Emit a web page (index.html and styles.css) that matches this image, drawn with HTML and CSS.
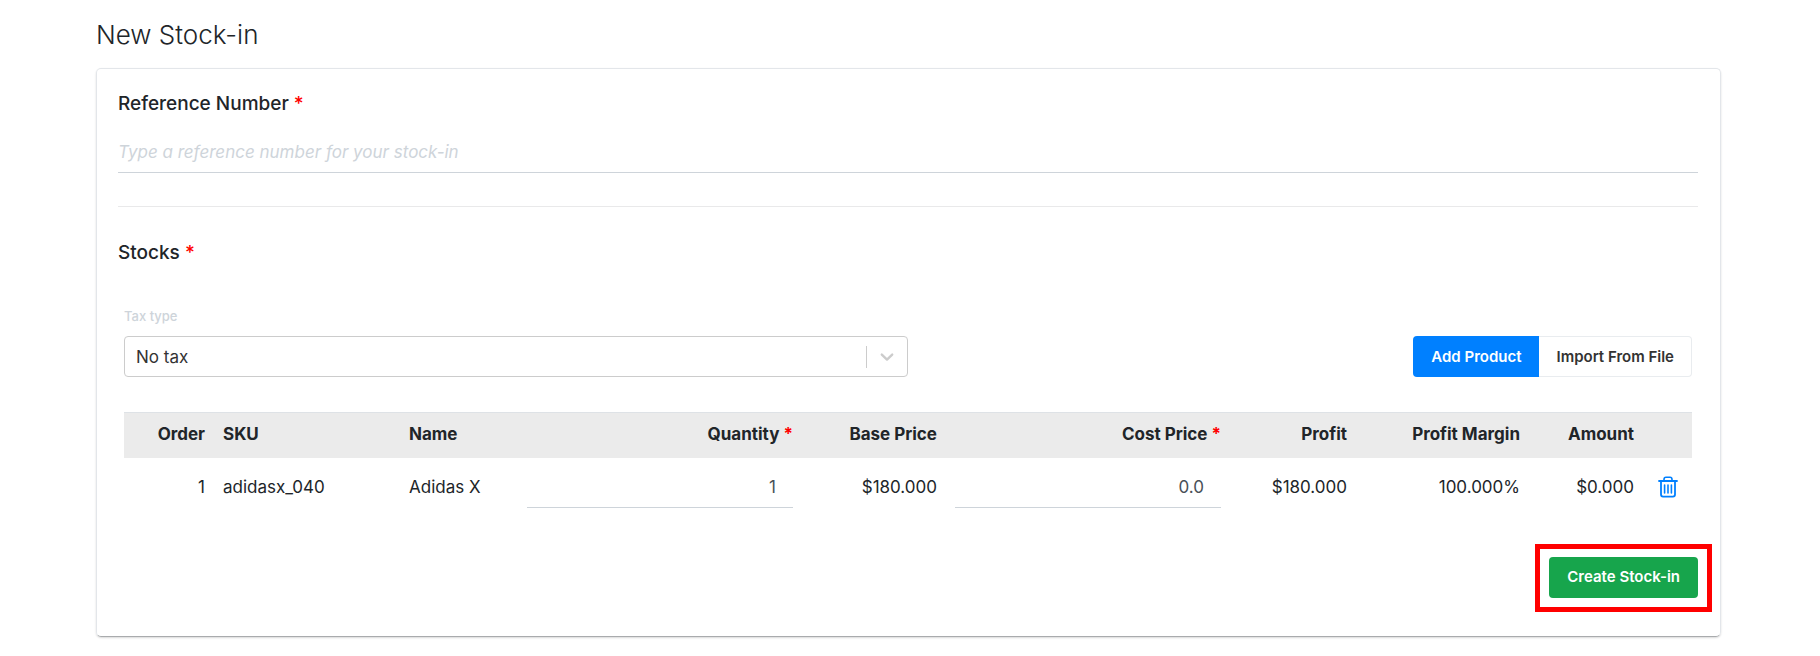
FILE: index.html
```
<!DOCTYPE html>
<html lang="en">
<head>
<meta charset="utf-8">
<meta name="viewport" content="width=device-width, initial-scale=1">
<title>New Stock-in</title>
<link rel="stylesheet" href="styles.css">
</head>
<body>
<main class="page">
  <h1 class="page-title">New Stock-in</h1>
  <form class="card">
    <label class="field-label" for="reference">Reference Number <span class="required">*</span></label>
    <input class="line-input reference-input" id="reference" type="text" placeholder="Type a reference number for your stock-in">
    <hr class="divider">
    <h2 class="field-label">Stocks <span class="required">*</span></h2>
    <section class="stocks">
      <div class="toolbar">
        <div class="tax">
          <label class="tax-label" for="tax">Tax type</label>
          <div class="select-wrap">
            <select class="select" id="tax"><option>No tax</option></select>
            <span class="select-indicator">
              <svg width="20" height="20" viewBox="0 0 20 20" aria-hidden="true"><path d="M4.8 7.6 10 12.6 15.2 7.6" fill="none" stroke="currentColor" stroke-width="2.4" stroke-linecap="round" stroke-linejoin="round"/></svg>
            </span>
          </div>
        </div>
        <div class="button-group">
          <button class="button button-primary" type="button">Add Product</button>
          <button class="button button-plain" type="button">Import From File</button>
        </div>
      </div>
      <table class="table">
        <colgroup>
          <col class="col-order"><col class="col-sku"><col class="col-name"><col class="col-input"><col class="col-base"><col class="col-input"><col class="col-profit"><col class="col-margin"><col class="col-amount"><col class="col-action">
        </colgroup>
        <thead>
          <tr>
            <th class="num">Order</th>
            <th>SKU</th>
            <th>Name</th>
            <th class="num">Quantity <span class="required">*</span></th>
            <th class="num">Base Price</th>
            <th class="num">Cost Price <span class="required">*</span></th>
            <th class="num">Profit</th>
            <th class="num">Profit Margin</th>
            <th class="num">Amount</th>
            <th></th>
          </tr>
        </thead>
        <tbody>
          <tr>
            <td class="num">1</td>
            <td>adidasx_040</td>
            <td>Adidas X</td>
            <td><input class="line-input cell-input" type="text" value="1" aria-label="Quantity"></td>
            <td class="num">$180.000</td>
            <td><input class="line-input cell-input" type="text" value="0.0" aria-label="Cost price"></td>
            <td class="num">$180.000</td>
            <td class="num">100.000%</td>
            <td class="num">$0.000</td>
            <td class="action">
              <button class="icon-button" type="button" aria-label="Delete row">
                <svg width="20" height="22" viewBox="0 0 20 22" aria-hidden="true" fill="none" stroke="currentColor" stroke-linecap="round" stroke-linejoin="round"><path d="M1 5h18" stroke-width="1.8"/><path d="M6 4.6V3.4Q6 1.2 8 1.2h4q2 0 2 2.2v1.2" stroke-width="1.6"/><path d="M3 5v13.6q0 2 2 2h10q2 0 2-2V5" stroke-width="1.8"/><path d="M6.6 9v8M10 9v8M13.4 9v8" stroke-width="1.6"/></svg>
              </button>
            </td>
          </tr>
        </tbody>
      </table>
    </section>
    <div class="actions">
      <div class="highlighted"><button class="button button-success" type="submit">Create Stock-in</button></div>
    </div>
  </form>
</main>
</body>
</html>
```
FILE: styles.css
```
* {
  box-sizing: border-box;
}

body {
  margin: 0;
  background: #fff;
  color: #212529;
  font-family: Inter, "Liberation Sans", sans-serif;
  font-size: 17px;
  line-height: 26px;
}

button,
input,
select {
  font: inherit;
  color: inherit;
}

.page {
  padding: 18px 99px 20px 96px;
}

.page-title {
  margin: 0 0 16px;
  font-size: 26px;
  font-weight: 300;
  line-height: 34px;
}

.card {
  padding: 22px 22px 38px 21px;
  border: 1px solid #e3e6ea;
  border-bottom-color: #a9abad;
  border-radius: 5px;
  box-shadow: 0 1px 2px rgba(0, 0, 0, 0.15);
}

.field-label {
  display: block;
  margin: 0;
  font-size: 19px;
  font-weight: 500;
  line-height: 26px;
}

.required {
  color: #f00;
}

.line-input {
  display: block;
  width: 100%;
  border: 0;
  border-bottom: 1px solid #ced4da;
  border-radius: 0;
  background: transparent;
  outline: 0;
}

.reference-input {
  height: 42px;
  margin-top: 14px;
  padding: 0;
}

.reference-input::placeholder {
  color: #ced4da;
  font-style: italic;
  opacity: 1;
}

.divider {
  margin: 33px 0;
  border: 0;
  border-top: 1px solid #e9e9ea;
}

.stocks {
  padding: 40px 6px 0;
}

.toolbar {
  display: flex;
  align-items: flex-end;
  justify-content: space-between;
}

.tax {
  width: 50%;
}

.tax-label {
  display: block;
  margin-bottom: 10px;
  color: #ced4da;
  font-size: 13px;
  font-weight: 500;
  line-height: 20px;
}

.select-wrap {
  position: relative;
}

.select {
  display: block;
  width: 100%;
  height: 41px;
  padding: 0 50px 0 11px;
  border: 1px solid #ccc;
  border-radius: 4px;
  background: #fff;
  color: #333;
  appearance: none;
}

.select-indicator {
  position: absolute;
  top: 10px;
  right: 1px;
  bottom: 9px;
  display: flex;
  align-items: center;
  justify-content: center;
  width: 41px;
  border-left: 1px solid #ccc;
  color: #ccc;
  pointer-events: none;
}

.button-group {
  display: flex;
}

.button {
  height: 41px;
  padding: 0 17px;
  border: 1px solid transparent;
  border-radius: 4px;
  font-size: 15px;
  font-weight: 600;
  cursor: pointer;
}

.button-primary {
  border-radius: 4px 0 0 4px;
  background: #0080ff;
  color: #fff;
}

.button-plain {
  border-color: #e9ecef;
  border-left: 0;
  border-radius: 0 4px 4px 0;
  background: #fff;
  color: #333;
}

.button-success {
  background: #17a54c;
  color: #fff;
}

.table {
  width: 100%;
  margin-top: 35px;
  border-collapse: collapse;
  table-layout: fixed;
}

.col-order { width: 90px; }
.col-sku { width: 186px; }
.col-name { width: 118px; }
.col-input { width: 284px; }
.col-base { width: 144px; }
.col-profit { width: 126px; }
.col-margin { width: 173px; }
.col-amount { width: 114px; }
.col-action { width: 49px; }

.table th,
.table td {
  padding: 8px 9px;
  text-align: left;
  white-space: nowrap;
}

.table th {
  height: 45px;
  border-top: 1px solid #dee2e6;
  background: #ebebeb;
  font-weight: 700;
  vertical-align: top;
}

.table td {
  padding-top: 9px;
}

.table .num {
  text-align: right;
}

.cell-input {
  height: 41px;
  padding: 0 17px;
  color: #495057;
  text-align: right;
}

.icon-button {
  display: block;
  padding: 0;
  border: 0;
  background: none;
  color: #0080ff;
  cursor: pointer;
}

.table .action {
  padding-left: 15px;
}

.icon-button svg {
  display: block;
}

.actions {
  display: flex;
  justify-content: flex-end;
  margin-top: 41px;
}

.highlighted {
  position: relative;
}

.highlighted::after {
  position: absolute;
  inset: -13px -14px -14px;
  border: 5px solid #f00;
  content: "";
  pointer-events: none;
}
```
